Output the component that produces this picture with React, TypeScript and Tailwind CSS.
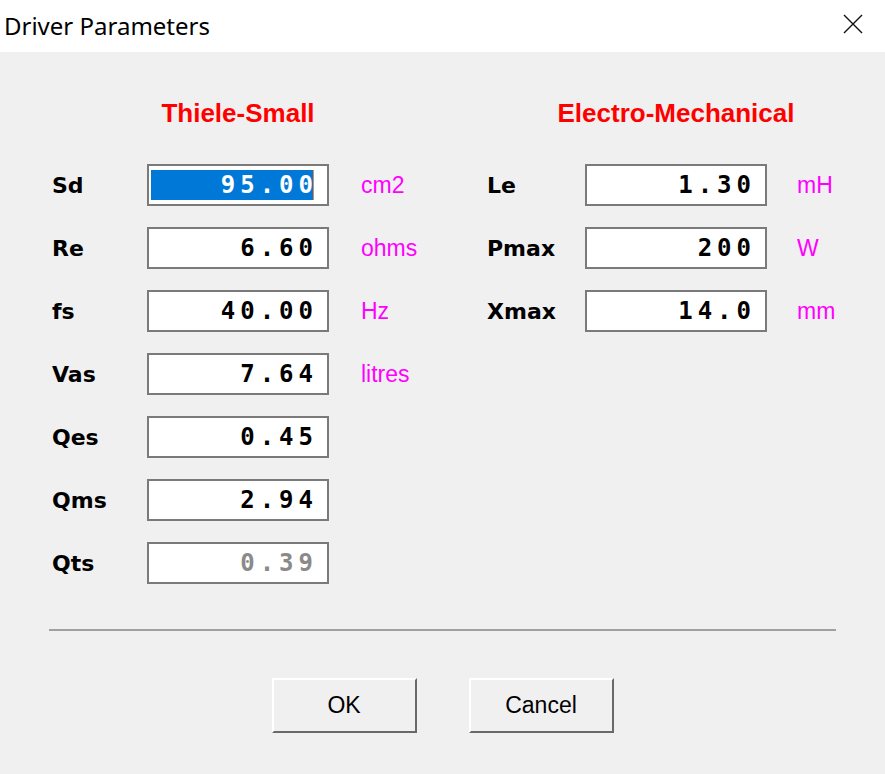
import type { ReactNode } from 'react'

type Field = {
  label: string
  value: string
  unit?: string
  selected?: boolean
  disabled?: boolean
}

const thieleSmall: Field[] = [
  { label: 'Sd', value: '95.00', unit: 'cm2', selected: true },
  { label: 'Re', value: '6.60', unit: 'ohms' },
  { label: 'fs', value: '40.00', unit: 'Hz' },
  { label: 'Vas', value: '7.64', unit: 'litres' },
  { label: 'Qes', value: '0.45' },
  { label: 'Qms', value: '2.94' },
  { label: 'Qts', value: '0.39', disabled: true },
]

const electroMechanical: Field[] = [
  { label: 'Le', value: '1.30', unit: 'mH' },
  { label: 'Pmax', value: '200', unit: 'W' },
  { label: 'Xmax', value: '14.0', unit: 'mm' },
]

function ValueBox({ field }: { field: Field }) {
  const textColor = field.selected
    ? 'text-white'
    : field.disabled
      ? 'text-[#8a8a8a]'
      : 'text-black'

  return (
    <div className="flex h-[42px] w-[182px] items-center border-2 border-[#7a7a7a] bg-white pl-[2px] pr-[13px]">
      <div
        className={`flex h-[30px] flex-1 items-center justify-end ${field.selected ? 'bg-[#0078d7]' : ''}`}
      >
        <span
          className={`mr-[-5px] font-['DejaVu_Sans_Mono',monospace] text-[24px] font-bold leading-[30px] tracking-[5px] ${textColor}`}
        >
          {field.value}
        </span>
      </div>
      <div className={`h-[30px] w-px ${field.selected ? 'bg-[#e8894a]' : ''}`} />
    </div>
  )
}

function Column({
  title,
  fields,
  labelWidth,
  unitGap,
}: {
  title: ReactNode
  fields: Field[]
  labelWidth: string
  unitGap: string
}) {
  return (
    <div className="flex flex-col">
      <div className="flex h-[30px]">
        <div className={`shrink-0 ${labelWidth}`} />
        <div className="flex w-[182px] shrink-0 justify-center whitespace-nowrap font-['Liberation_Sans',sans-serif] text-[26px] font-bold leading-[30px] text-[#ff0000]">
          {title}
        </div>
      </div>

      <div className="mt-[36px] flex flex-col gap-[21px]">
        {fields.map((field) => (
          <div key={field.label} className="flex h-[42px] items-center">
            <div
              className={`${labelWidth} font-['DejaVu_Sans',sans-serif] text-[22px] font-bold text-black`}
            >
              {field.label}
            </div>
            <ValueBox field={field} />
            {field.unit ? (
              <div
                className={`${unitGap} font-['Liberation_Sans',sans-serif] text-[23px] text-[#ff00ff]`}
              >
                {field.unit}
              </div>
            ) : null}
          </div>
        ))}
      </div>
    </div>
  )
}

function DialogButton({ children }: { children: ReactNode }) {
  return (
    <button
      type="button"
      className="h-[55px] w-[145px] border-2 border-t-white border-l-white border-r-[#696969] border-b-[#696969] bg-[#f0f0f0] font-['Liberation_Sans',sans-serif] text-[23px] text-black"
    >
      {children}
    </button>
  )
}

export default function App() {
  return (
    <div className="flex h-[774px] w-[885px] flex-col bg-[#f0f0f0]">
      <div className="flex h-[52px] items-center justify-between bg-white pl-[4px] pr-[22px]">
        <span className="font-['Noto_Sans',sans-serif] text-[24px] text-black">
          Driver Parameters
        </span>
        <svg width="20" height="20" viewBox="0 0 20 20" className="mb-[4px]">
          <path d="M1 1 L19 19 M19 1 L1 19" stroke="#111" strokeWidth="1.4" fill="none" />
        </svg>
      </div>

      <div className="mt-[46px] flex pl-[52px]">
        <div className="w-[435px]">
          <Column
            title="Thiele-Small"
            fields={thieleSmall}
            labelWidth="w-[95px]"
            unitGap="ml-[32px]"
          />
        </div>
        <Column
          title="Electro-Mechanical"
          fields={electroMechanical}
          labelWidth="w-[98px]"
          unitGap="ml-[30px]"
        />
      </div>

      <div className="mx-[49px] mt-[45px] border-t-2 border-t-[#a0a0a0]" />

      <div className="mt-[47px] flex justify-center gap-[52px]">
        <DialogButton>OK</DialogButton>
        <DialogButton>Cancel</DialogButton>
      </div>
    </div>
  )
}
